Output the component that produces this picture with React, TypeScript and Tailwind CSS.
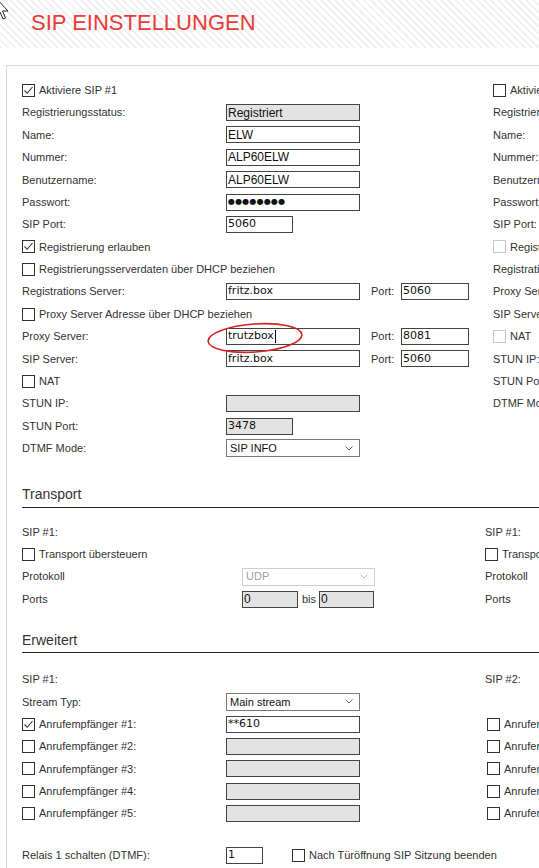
import React from 'react'

const FONT = "font-['Liberation_Sans',Arial,sans-serif]"

function Checkbox({ checked = false, disabled = false }: { checked?: boolean; disabled?: boolean }) {
  return (
    <span
      className={`inline-flex w-[13px] h-[13px] shrink-0 items-center justify-center bg-white border ${
        disabled ? 'border-[#c8c8c8]' : 'border-[#333]'
      }`}
    >
      {checked && (
        <svg width="11" height="11" viewBox="0 0 11 11">
          <polyline points="1.5,5.5 4.2,8.3 9.5,2" fill="none" stroke="#333" strokeWidth="1.1" />
        </svg>
      )}
    </span>
  )
}

function Field({
  value = '',
  w,
  grey = false,
  mono = false,
  children,
}: {
  value?: string
  w: string
  grey?: boolean
  mono?: boolean
  children?: React.ReactNode
}) {
  return (
    <div
      className={`${w} h-[17px] flex items-center border border-[#444] pl-[1px] overflow-hidden whitespace-nowrap text-[#111] ${
        grey ? 'bg-[#e3e3e3]' : 'bg-white'
      } ${mono ? "font-['DejaVu_Sans',Verdana,sans-serif] text-[11px]" : 'text-[12px]'}`}
    >
      {value}
      {children}
    </div>
  )
}

function Select({ value, w, disabled = false }: { value: string; w: string; disabled?: boolean }) {
  return (
    <div
      className={`${w} h-[18px] flex items-center justify-between border bg-white pl-[3px] pr-[6px] text-[11px] ${
        disabled ? 'border-[#cfcfcf] text-[#a0a0a0]' : 'border-[#7a7a7a] text-[#111]'
      }`}
    >
      <span>{value}</span>
      <svg width="8" height="5" viewBox="0 0 8 5">
        <polyline points="0.5,0.5 4,4 7.5,0.5" fill="none" stroke={disabled ? '#bbb' : '#666'} strokeWidth="1" />
      </svg>
    </div>
  )
}

function Row({ children }: { children?: React.ReactNode }) {
  return <div className="h-[22.4px] flex items-center whitespace-nowrap">{children}</div>
}

function Label({ children, w = 'w-[204px]' }: { children: React.ReactNode; w?: string }) {
  return <span className={`${w} shrink-0`}>{children}</span>
}

function CheckRow({ label, checked, disabled }: { label: string; checked?: boolean; disabled?: boolean }) {
  return (
    <Row>
      <Checkbox checked={checked} disabled={disabled} />
      <span className="ml-[4px]">{label}</span>
    </Row>
  )
}

function PortField({ server, port }: { server: React.ReactNode; port: string }) {
  return (
    <>
      {server}
      <span className="ml-[11px] w-[30px]">Port:</span>
      <Field value={port} w="w-[68px]" mono />
    </>
  )
}

function Heading({ title, mt }: { title: string; mt: string }) {
  return (
    <div className={`${mt} border-b border-[#222] pb-[2px]`}>
      <div className="h-[20px] flex items-center text-[14px] text-[#333]">{title}</div>
    </div>
  )
}

export default function App() {
  return (
    <div className={`relative w-[539px] h-[868px] overflow-hidden bg-white text-[11px] text-[#333] ${FONT}`}>
      {/* Kopfzeile */}
      <div className="h-[48px] pl-[31px] pt-[11px] bg-[repeating-linear-gradient(45deg,#f1f1f1_0px,#f1f1f1_2px,#ffffff_2px,#ffffff_5px)]">
        <h1 className="text-[22px] leading-[24px] text-[#ea3b3b]">SIP EINSTELLUNGEN</h1>
      </div>

      <div className="ml-[6px] mt-[17px] w-[720px] border-l border-t border-[#dadada] pl-[15px] pt-[13px] pb-[40px]">
        {/* SIP Konten */}
        <div className="flex">
          <div className="w-[471px] shrink-0">
            <CheckRow label="Aktiviere SIP #1" checked />
            <Row>
              <Label>Registrierungsstatus:</Label>
              <Field value="Registriert" w="w-[134px]" grey />
            </Row>
            <Row>
              <Label>Name:</Label>
              <Field value="ELW" w="w-[134px]" />
            </Row>
            <Row>
              <Label>Nummer:</Label>
              <Field value="ALP60ELW" w="w-[134px]" />
            </Row>
            <Row>
              <Label>Benutzername:</Label>
              <Field value="ALP60ELW" w="w-[134px]" />
            </Row>
            <Row>
              <Label>Passwort:</Label>
              <Field w="w-[134px]">
                <span className="font-['DejaVu_Sans',sans-serif] text-[8px] tracking-[0.2px]">●●●●●●●●</span>
              </Field>
            </Row>
            <Row>
              <Label>SIP Port:</Label>
              <Field value="5060" w="w-[67px]" mono />
            </Row>
            <CheckRow label="Registrierung erlauben" checked />
            <CheckRow label="Registrierungsserverdaten über DHCP beziehen" />
            <Row>
              <Label>Registrations Server:</Label>
              <PortField server={<Field value="fritz.box" w="w-[134px]" mono />} port="5060" />
            </Row>
            <CheckRow label="Proxy Server Adresse über DHCP beziehen" />
            <Row>
              <Label>Proxy Server:</Label>
              <PortField
                server={
                  <Field value="trutzbox" w="w-[134px]" mono>
                    <span className="ml-[1px] w-[1px] h-[13px] bg-black" />
                  </Field>
                }
                port="8081"
              />
            </Row>
            <Row>
              <Label>SIP Server:</Label>
              <PortField server={<Field value="fritz.box" w="w-[134px]" mono />} port="5060" />
            </Row>
            <CheckRow label="NAT" />
            <Row>
              <Label>STUN IP:</Label>
              <Field w="w-[134px]" grey />
            </Row>
            <Row>
              <Label>STUN Port:</Label>
              <Field value="3478" w="w-[67px]" grey mono />
            </Row>
            <Row>
              <Label>DTMF Mode:</Label>
              <Select value="SIP INFO" w="w-[134px]" />
            </Row>
          </div>

          <div className="flex-1">
            <CheckRow label="Aktiviere SIP #2" />
            <Row>Registrierungsstatus:</Row>
            <Row>Name:</Row>
            <Row>Nummer:</Row>
            <Row>Benutzername:</Row>
            <Row>Passwort:</Row>
            <Row>SIP Port:</Row>
            <CheckRow label="Registrierung erlauben" disabled />
            <Row>Registrations Server:</Row>
            <Row>Proxy Server:</Row>
            <Row>SIP Server:</Row>
            <CheckRow label="NAT" disabled />
            <Row>STUN IP:</Row>
            <Row>STUN Port:</Row>
            <Row>DTMF Mode:</Row>
          </div>
        </div>

        {/* Transport */}
        <Heading title="Transport" mt="mt-[25px]" />
        <div className="flex mt-[13px]">
          <div className="w-[463px] shrink-0">
            <Row>SIP #1:</Row>
            <CheckRow label="Transport übersteuern" />
            <Row>
              <Label w="w-[220px]">Protokoll</Label>
              <Select value="UDP" w="w-[133px]" disabled />
            </Row>
            <Row>
              <Label w="w-[220px]">Ports</Label>
              <Field value="0" w="w-[56px]" grey />
              <span className="ml-[4px] w-[17px]">bis</span>
              <Field value="0" w="w-[55px]" grey />
            </Row>
          </div>
          <div className="flex-1">
            <Row>SIP #1:</Row>
            <CheckRow label="Transport übersteuern" />
            <Row>Protokoll</Row>
            <Row>Ports</Row>
          </div>
        </div>

        {/* Erweitert */}
        <Heading title="Erweitert" mt="mt-[20px]" />
        <div className="flex mt-[15px]">
          <div className="w-[463px] shrink-0">
            <Row>SIP #1:</Row>
            <Row>
              <Label>Stream Typ:</Label>
              <Select value="Main stream" w="w-[134px]" />
            </Row>
            {[1, 2, 3, 4, 5].map((n) => (
              <Row key={n}>
                <span className="w-[204px] shrink-0 flex items-center">
                  <Checkbox checked={n === 1} />
                  <span className="ml-[4px]">Anrufempfänger #{n}:</span>
                </span>
                {n === 1 ? <Field value="**610" w="w-[134px]" mono /> : <Field w="w-[134px]" grey />}
              </Row>
            ))}
          </div>
          <div className="flex-1 pl-[2px]">
            <Row>
              <span className="-ml-[2px]">SIP #2:</span>
            </Row>
            <Row />
            {[1, 2, 3, 4, 5].map((n) => (
              <CheckRow key={n} label={`Anrufempfänger #${n}:`} />
            ))}
          </div>
        </div>

        <div className="mt-[19px]">
          <Row>
            <Label>Relais 1 schalten (DTMF):</Label>
            <Field value="1" w="w-[37px]" mono />
            <span className="ml-[29px] flex items-center">
              <Checkbox />
              <span className="ml-[4px]">Nach Türöffnung SIP Sitzung beenden</span>
            </span>
          </Row>
        </div>
      </div>

      {/* Markierung */}
      <svg className="absolute left-[204px] top-[318px] pointer-events-none" width="104" height="40" viewBox="0 0 104 40">
        <ellipse cx="51" cy="20" rx="47" ry="14" transform="rotate(-4 51 20)" fill="none" stroke="#d42323" strokeWidth="1.6" />
      </svg>

      {/* Mauszeiger */}
      <svg className="absolute left-0 top-0 pointer-events-none" width="14" height="26" viewBox="0 0 14 26">
        <path d="M-4,-2 L-4,16 L0,12 L3,19 L5.5,18 L2.5,11 L8,11 Z" fill="#fff" stroke="#222" strokeWidth="1" />
      </svg>
    </div>
  )
}
